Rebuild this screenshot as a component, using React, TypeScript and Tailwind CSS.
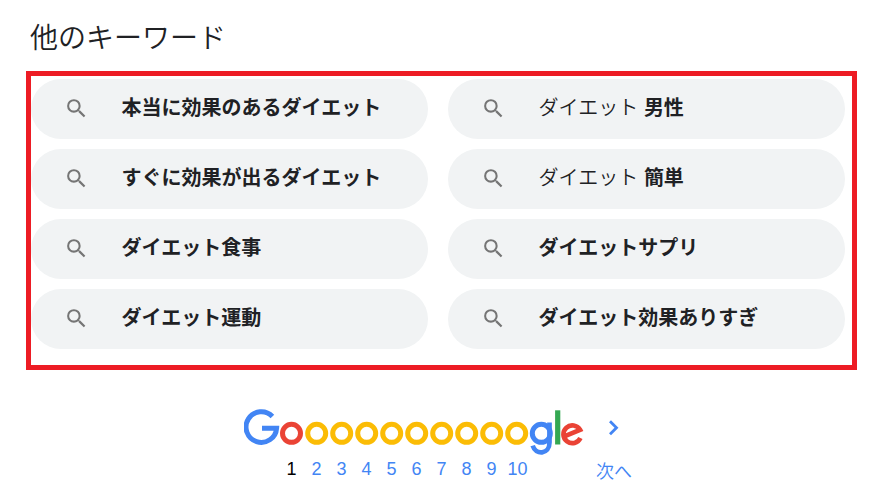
import React from 'react';

type Keyword = { light?: string; bold: string };

const keywords: Keyword[] = [
  { bold: '本当に効果のあるダイエット' },
  { light: 'ダイエット', bold: '男性' },
  { bold: 'すぐに効果が出るダイエット' },
  { light: 'ダイエット', bold: '簡単' },
  { bold: 'ダイエット食事' },
  { bold: 'ダイエットサプリ' },
  { bold: 'ダイエット運動' },
  { bold: 'ダイエット効果ありすぎ' },
];

const yellowCenters = [72.7, 97.7, 122.7, 147.7, 172.7, 197.7, 222.7, 247.7, 272.7];
const pages = [2, 3, 4, 5, 6, 7, 8, 9];

function SearchIcon() {
  return (
    <svg className="mb-px ml-[33px] size-[25px] shrink-0" viewBox="0 0 24 24" fill="#757575">
      <path d="M15.5 14h-.79l-.28-.27A6.471 6.471 0 0 0 16 9.5 6.5 6.5 0 1 0 9.5 16c1.61 0 3.09-.59 4.23-1.57l.27.28v.79l5 4.99L20.49 19l-4.99-5zm-6 0C7.01 14 5 11.99 5 9.5S7.01 5 9.5 5 14 7.01 14 9.5 11.99 14 9.5 14z" />
    </svg>
  );
}

function Logo() {
  return (
    <svg className="block h-[48px] w-[342px]" viewBox="0 0 342 48" fill="none" strokeWidth="5">
      <path d="M28.4 8.5A15.3 15.3 0 1 0 32.6 20.2H18" stroke="#4285f4" />
      <circle cx="47.5" cy="25.3" r="9" stroke="#ea4335" />
      {yellowCenters.map((cx) => (
        <circle key={cx} cx={cx} cy="25.3" r="9" stroke="#fbbc05" />
      ))}
      <circle cx="297.3" cy="25.3" r="9" stroke="#4285f4" />
      <path d="M305.5 14.5V34.5C305.5 47 291.5 47.2 288.7 37.7" stroke="#4285f4" strokeWidth="4.7" />
      <path d="M313.7 2.3V36.5" stroke="#34a853" strokeWidth="5.2" />
      <path d="M320.3 28.4L336 21.8A8.9 8.9 0 1 0 336.4 30" stroke="#ea4335" strokeWidth="4.7" />
    </svg>
  );
}

export default function App() {
  return (
    <main className="h-[497px] w-[888px] overflow-hidden bg-white font-['Liberation_Sans','Noto_Sans_CJK_JP',sans-serif] text-[#202124]">
      <h1 className="h-[71px] pl-[30px] pt-[19px] text-[28px] leading-[40px] font-[350]">他のキーワード</h1>
      <section className="ml-[26px] h-[299px] w-[831px] border-[5px] border-[#ed1c24] pt-[3px]">
        <div className="grid grid-cols-[397px_397px] gap-x-5 gap-y-2.5">
          {keywords.map((k) => (
            <a key={k.bold} className="flex h-[60px] items-center rounded-full bg-[#f1f3f4]">
              <SearchIcon />
              <span className="mb-[3px] ml-[32.5px] text-[20px] leading-[30px] whitespace-pre">
                {k.light && <span className="font-[350]">{k.light} </span>}
                <b className="font-bold">{k.bold}</b>
              </span>
            </a>
          ))}
        </div>
      </section>
      <nav className="ml-[244px] pt-[38px] text-[#4285f4]">
        <div className="flex">
          <Logo />
          <svg className="mt-[10px] ml-[20px] h-[20px] w-[16px]" viewBox="0 0 16 20" fill="none">
            <path d="M4 3.2L10.5 9.7L4 16.3" stroke="#4285f4" strokeWidth="2.8" />
          </svg>
        </div>
        <div className="flex h-[30px] text-[18px] leading-[26px]">
          <span className="ml-[35px] w-[25px] text-center text-black">1</span>
          {pages.map((p) => (
            <span key={p} className="w-[25px] text-center">{p}</span>
          ))}
          <span className="w-[27px] text-center">10</span>
          <span className="ml-[65px] pt-[3px] font-[350]">次へ</span>
        </div>
      </nav>
    </main>
  );
}
